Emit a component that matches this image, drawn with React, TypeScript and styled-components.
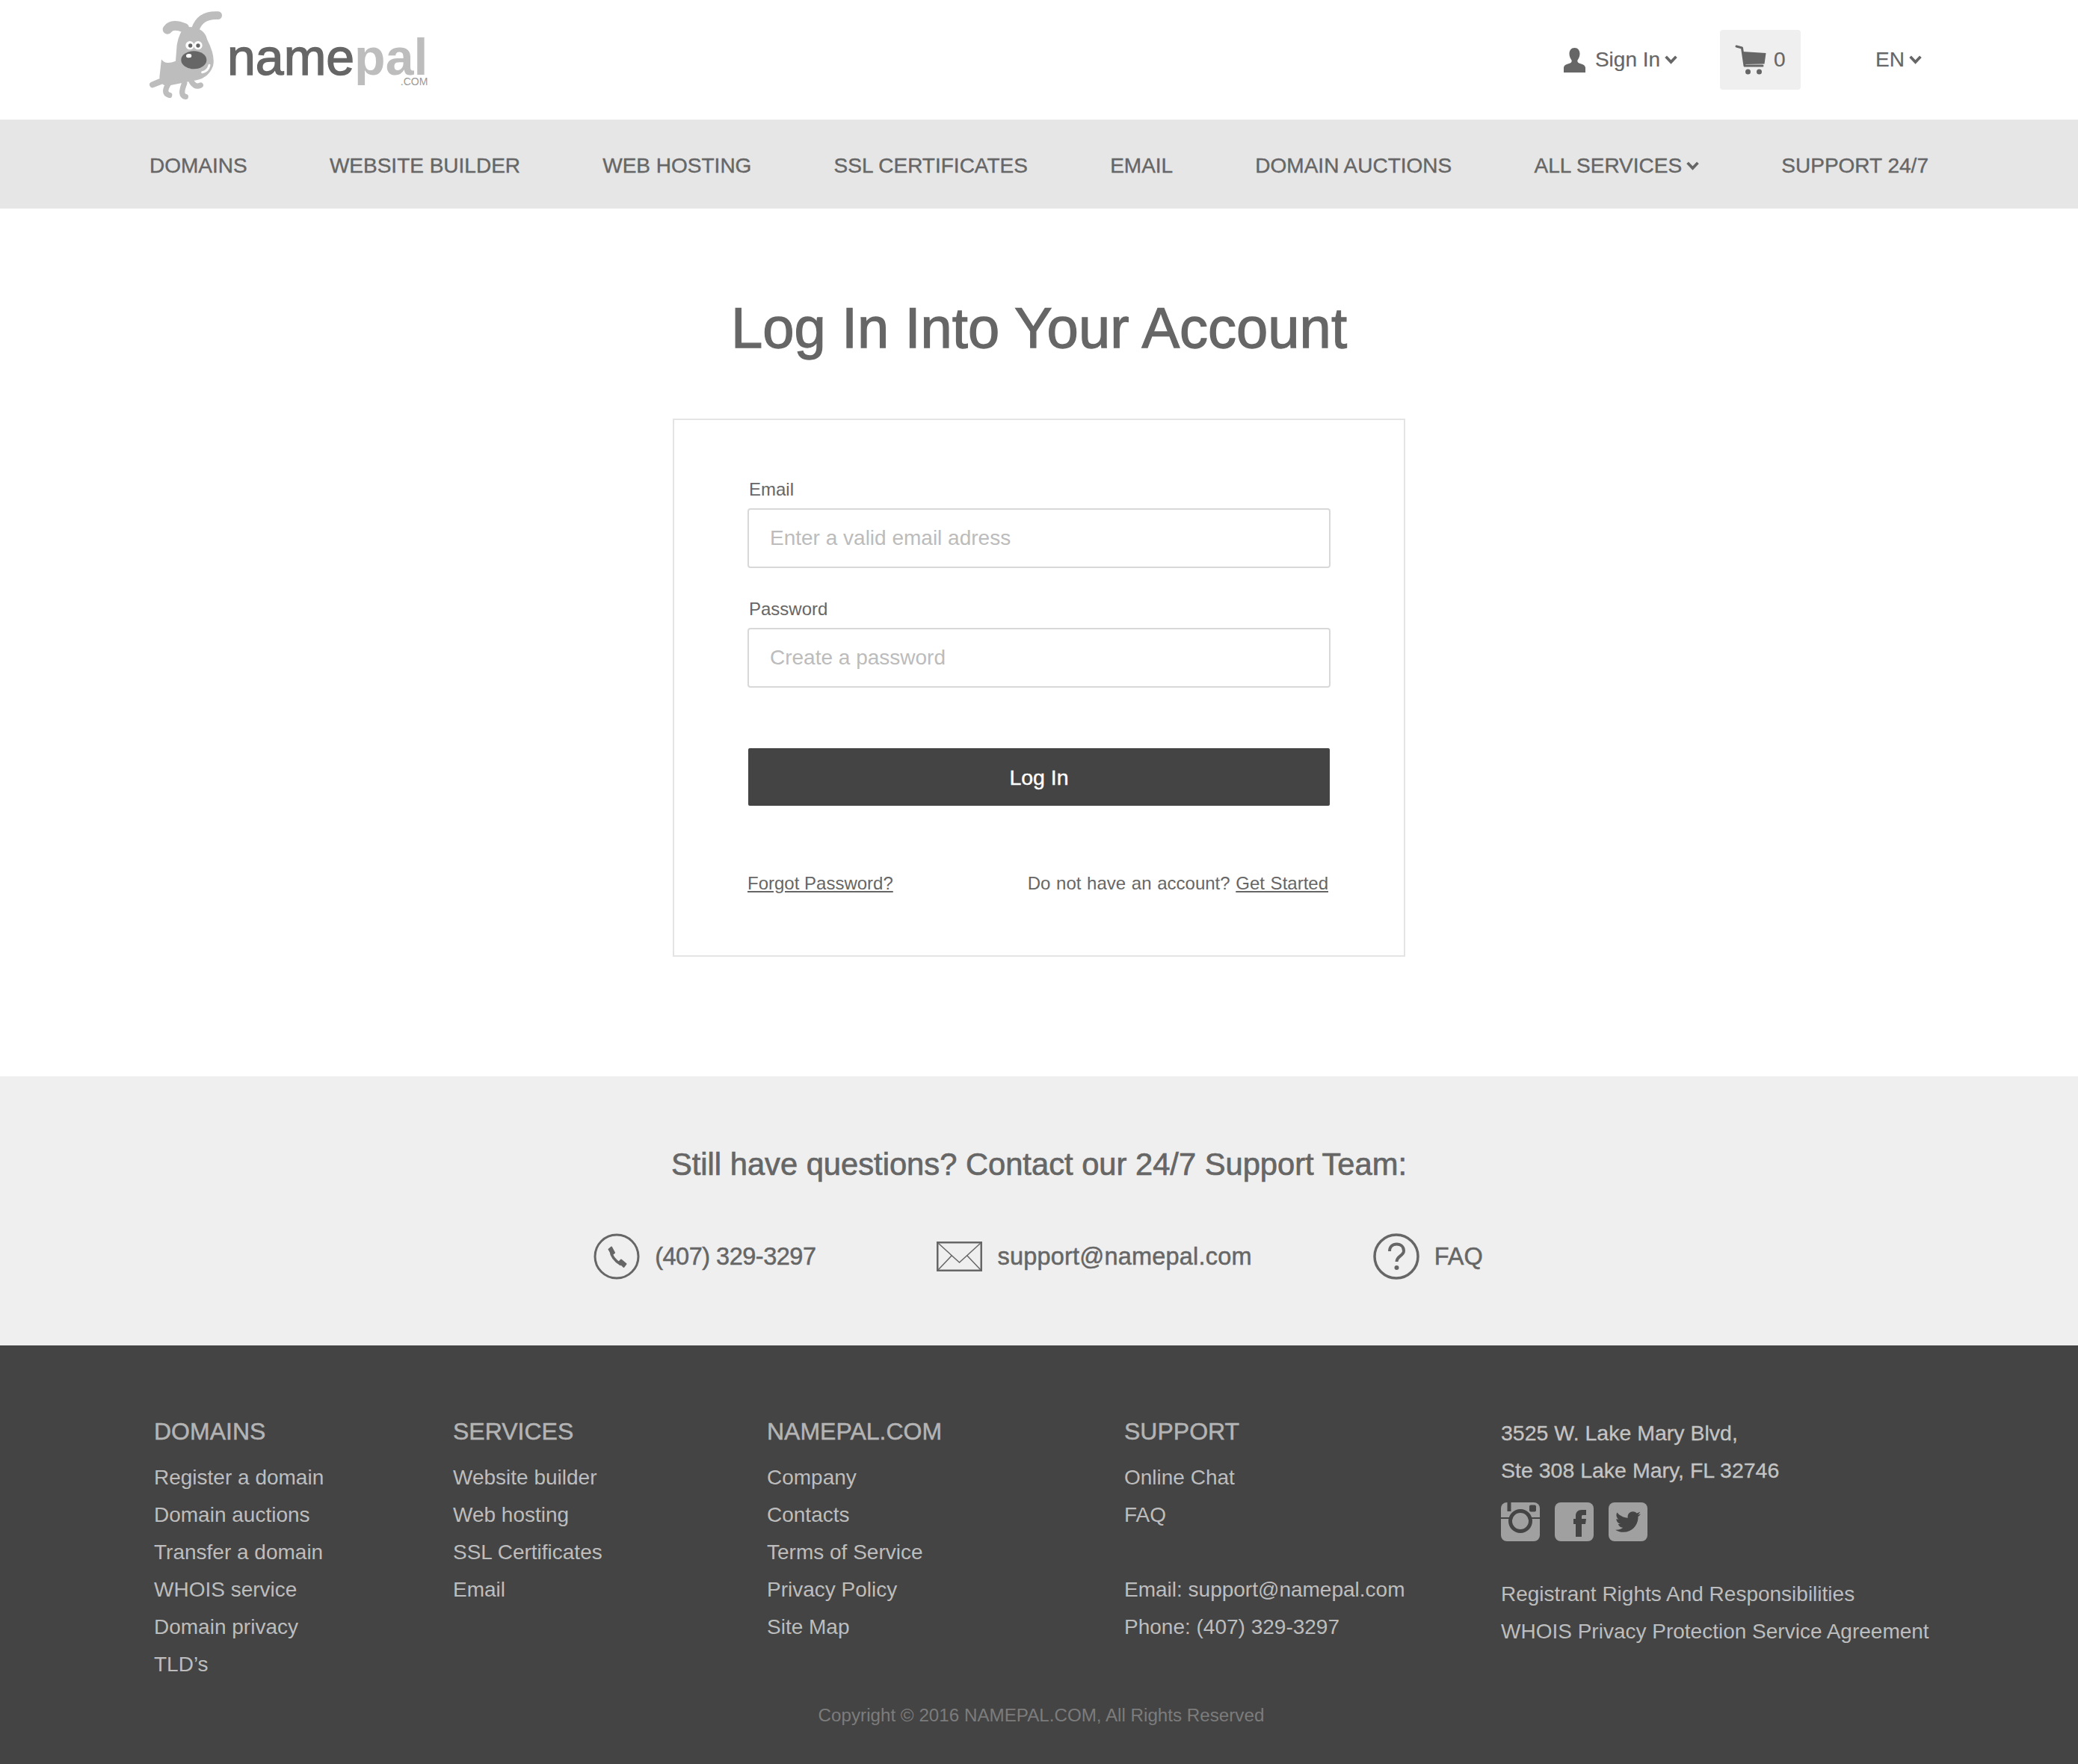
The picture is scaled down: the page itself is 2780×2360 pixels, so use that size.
import React from 'react'
import styled, { createGlobalStyle } from 'styled-components'
import { FaTwitter } from 'react-icons/fa'

const GlobalStyle = createGlobalStyle`
  html, body {
    margin: 0;
    padding: 0;
    background: #fff;
    font-family: "Liberation Sans", Arial, sans-serif;
    color: #666;
  }
  * { box-sizing: border-box; }
`

const Page = styled.div`
  width: 2780px;
  height: 2360px;
  display: flex;
  flex-direction: column;
  overflow: hidden;
`

const Header = styled.header`
  height: 160px;
  display: flex;
  align-items: center;
  justify-content: space-between;
  padding: 0 209px 0 200px;
`

const Logo = styled.a`
  position: relative;
  display: flex;
  align-items: flex-start;
  height: 160px;
  padding-top: 10px;
`

const LogoName = styled.div`
  margin: 35px 0 0 4px;
  font-size: 68px;
  line-height: 62px;
  color: #666;
  -webkit-text-stroke: 1.4px #666;
`

const LogoPal = styled.span`
  color: #bdbdbd;
  font-weight: 700;
  -webkit-text-stroke: 0;
`

const LogoCom = styled.span`
  position: absolute;
  right: 0;
  top: 104px;
  font-size: 14px;
  line-height: 10px;
  color: #999;
  -webkit-text-stroke: 0;
`

const UserMenu = styled.div`
  display: flex;
  align-items: center;
`

const MenuText = styled.span`
  font-size: 28px;
  line-height: 34px;
  color: #666;
  -webkit-text-stroke: 0.2px #666;
`

const SignIn = styled.a`
  display: flex;
  align-items: center;
  gap: 13px;
`

const MenuLabel = styled.span`
  display: flex;
  align-items: center;
  gap: 6px;
`

const CartBox = styled.a`
  width: 108px;
  height: 80px;
  margin-left: 57px;
  padding-left: 20px;
  display: flex;
  align-items: center;
  gap: 9px;
  background: #efefef;
  border-radius: 4px;
`

const Language = styled(MenuLabel)`
  margin-left: 100px;
`

const Nav = styled.nav`
  height: 119px;
  padding: 5px 200px 0;
  display: flex;
  align-items: center;
  justify-content: space-between;
  background: #e6e6e6;
`

const NavItem = styled.a`
  display: flex;
  align-items: center;
  gap: 6px;
  font-size: 28px;
  color: #666;
  -webkit-text-stroke: 0.4px #666;
  white-space: nowrap;
`

const Main = styled.main`
  height: 1161px;
  display: flex;
  flex-direction: column;
  align-items: center;
  padding-top: 115px;
`

const Title = styled.h1`
  margin: 0;
  font-size: 76px;
  line-height: 90px;
  font-weight: 400;
  color: #666;
  -webkit-text-stroke: 1.3px #666;
`

const Card = styled.form`
  width: 980px;
  height: 720px;
  margin-top: 76px;
  padding: 78px 98px 0;
  border: 2px solid #e4e4e4;
`

const FieldLabel = styled.label`
  display: block;
  margin: 0 0 10px 2px;
  font-size: 24px;
  line-height: 30px;
  color: #666;
`

const Field = styled.div`
  margin-bottom: 40px;
`

const TextInput = styled.input`
  display: block;
  width: 780px;
  height: 80px;
  padding: 0 28px;
  border: 2px solid #d8d8d8;
  border-radius: 4px;
  background: #fff;
  font-family: inherit;
  font-size: 28px;
  color: #666;
  &::placeholder {
    color: #bcbcbc;
    opacity: 1;
  }
`

const SubmitButton = styled.button`
  display: block;
  width: 778px;
  height: 77px;
  margin: 81px 0 0 1px;
  padding: 2px 0 0;
  border: 0;
  border-radius: 2px;
  background: #444;
  color: #fff;
  font-family: inherit;
  font-size: 28.500px;
  -webkit-text-stroke: 0.4px #fff;
`

const CardLinks = styled.div`
  display: flex;
  justify-content: space-between;
  margin: 89px 3px 0 0;
  font-size: 24px;
  line-height: 30px;
  color: #666;
`

const SignUpPrompt = styled.span`
  word-spacing: 1px;
`

const Link = styled.a`
  color: #666;
  text-decoration: underline;
`

const Contact = styled.section`
  height: 360px;
  background: #efefef;
  display: flex;
  flex-direction: column;
  align-items: center;
  padding-top: 91px;
`

const ContactTitle = styled.h2`
  margin: 0;
  font-size: 41.700px;
  line-height: 54px;
  font-weight: 400;
  color: #666;
  -webkit-text-stroke: 0.7px #666;
`

const ContactRow = styled.div`
  display: flex;
  align-items: center;
  gap: 162px;
  margin: 65px 0 0 -2px;
`

const ContactItem = styled.a<{ $tracking?: number }>`
  display: flex;
  align-items: center;
  gap: 20px;
  font-size: 32.500px;
  line-height: 62px;
  letter-spacing: ${p => p.$tracking ?? 0}px;
  color: #666;
  -webkit-text-stroke: 0.5px #666;
`

const Footer = styled.footer`
  height: 560px;
  background: #444;
  color: #bdbdbd;
  display: flex;
  flex-direction: column;
`

const FooterColumns = styled.div`
  display: flex;
  align-items: flex-start;
  padding: 90px 0 0 206px;
  height: 480px;
`

const Column = styled.div<{ $width: number; $top?: number }>`
  width: ${p => p.$width}px;
  padding-top: ${p => p.$top ?? 0}px;
  flex: none;
`

const ColumnTitle = styled.h3`
  margin: 0 0 12px;
  font-size: 32px;
  line-height: 50px;
  font-weight: 400;
  color: #b4b4b4;
  -webkit-text-stroke: 0.5px #b4b4b4;
`

const FooterLine = styled.a<{ $gap?: boolean }>`
  display: block;
  font-size: 28px;
  line-height: 50px;
  color: #bdbdbd;
  white-space: nowrap;
  margin-top: ${p => (p.$gap ? 50 : 0)}px;
`

const Address = styled.div`
  font-size: 28.500px;
  line-height: 50px;
  color: #c4c4c4;
  -webkit-text-stroke: 0.3px #c4c4c4;
  white-space: nowrap;
`

const Socials = styled.div`
  display: flex;
  gap: 20px;
  margin: 18px 0 46px;
`

const SocialTile = styled.a`
  width: 52px;
  height: 52px;
  border-radius: 8px;
  background: #a0a0a0;
  color: #444;
  display: flex;
  align-items: center;
  justify-content: center;
  overflow: hidden;
`

const Copyright = styled.div`
  text-align: center;
  margin-left: 6px;
  font-size: 24.200px;
  line-height: 30px;
  color: #7c7c7c;
`

const Chevron = ({ size = 17 }: { size?: number }) => (
  <svg width={size} height={size * 0.7} viewBox="0 0 16 11" fill="none" stroke="#666" strokeWidth="3.500">
    <path d="M1.500 1.500 8 8.500l6.500-7" />
  </svg>
)

const DogLogo = () => (
  <svg width="100" height="125" viewBox="60 30 300 375">
    <g fill="none" stroke="#bdbdbd" strokeLinecap="round" strokeLinejoin="round">
      <path d="M132 118 Q150 92 200 112" strokeWidth="38" />
      <path d="M245 115 Q265 58 335 62" strokeWidth="32" />
      <path d="M72 340 Q120 320 150 310" strokeWidth="24" />
      <path d="M140 330 Q110 375 140 382" strokeWidth="22" />
      <path d="M200 335 Q180 385 205 388" strokeWidth="22" />
      <path d="M225 320 Q240 355 265 342" strokeWidth="22" />
    </g>
    <path
      fill="#bdbdbd"
      d="M205 108 Q280 105 292 160 Q325 225 315 265 Q295 320 230 325 L130 345 Q100 340 100 310 L108 238 Q122 262 165 245 L170 180 Q180 125 205 108Z"
    />
    <circle cx="222" cy="182" r="17" fill="#fff" />
    <circle cx="255" cy="182" r="17" fill="#fff" />
    <circle cx="224" cy="183" r="8" fill="#666" />
    <circle cx="255" cy="183" r="8" fill="#666" />
    <ellipse cx="238" cy="241" rx="51" ry="36" fill="#666" />
    <ellipse cx="218" cy="224" rx="11" ry="8" fill="#fff" />
    <path d="M300 262 Q295 285 272 290" fill="none" stroke="#fff" strokeWidth="9" strokeLinecap="round" />
  </svg>
)

const UserIcon = () => (
  <svg width="29" height="33" viewBox="0 0 29 33" fill="#666">
    <path d="M14.500 0C19 0 21.500 3.400 21.500 8c0 3.500-1.500 6.500-3 8.500-.5 1.500 0 3 2 4 4 1.500 8 2 8.500 6V33H0v-6.500c.5-4 4.500-4.500 8.500-6 2-1 2.500-2.500 2-4-1.500-2-3-5-3-8.500 0-4.600 2.500-8 7-8Z" />
  </svg>
)

const CartIcon = () => (
  <svg width="43" height="40" viewBox="0 0 42 40">
    <path d="M1.500 2 9 4l3.500 24h24" fill="none" stroke="#666" strokeWidth="3" strokeLinecap="round" strokeLinejoin="round" />
    <path d="M9.500 9 41 11l-2 14.500-25.500 .5Z" fill="#666" />
    <circle cx="17" cy="36" r="3.500" fill="#666" />
    <circle cx="32" cy="36" r="3.500" fill="#666" />
  </svg>
)

const PhoneIcon = () => (
  <svg width="62" height="62" viewBox="0 0 62 62" fill="none">
    <circle cx="31" cy="31" r="29" stroke="#666" strokeWidth="3" />
    <path d="M23 23 Q24 34 37 42" stroke="#666" strokeWidth="3.500" />
    <path d="M20.500 21.500 24 18.500 28 26 25 28.500Z M34 38.500 37 35.500 43.500 41 40.500 45Z" fill="#666" stroke="#666" strokeLinejoin="round" strokeWidth="2" />
  </svg>
)

const MailIcon = () => (
  <svg width="61" height="40" viewBox="0 0 61 40" fill="none" stroke="#666">
    <rect x="1.250" y="1.250" width="58.500" height="37.500" strokeWidth="2.500" />
    <path d="M2 2 30.500 28 59 2M2 38 20 19M59 38 41 19" strokeWidth="1.500" />
  </svg>
)

const HelpIcon = () => (
  <svg width="62" height="62" viewBox="0 0 62 62" fill="none">
    <circle cx="31" cy="31" r="29" stroke="#666" strokeWidth="3.500" />
    <path d="M22 24c0-6 4-9.500 9.500-9.500S41 18 41 23.500c0 6.500-9.500 7-9.500 14.500" stroke="#666" strokeWidth="4" />
    <circle cx="31.500" cy="46" r="3" fill="#666" />
  </svg>
)

const InstagramIcon = () => (
  <svg width="52" height="52" viewBox="0 0 52 52" fill="none">
    <path d="M0 21H14M38 21H52" stroke="#444" strokeWidth="2" />
    <circle cx="26" cy="25" r="13.500" stroke="#444" strokeWidth="5" />
    <rect x="38" y="3.500" width="9" height="9" rx="2" fill="#444" />
    <path d="M11 0V12" stroke="#444" strokeWidth="5" />
  </svg>
)

const FacebookIcon = () => (
  <svg width="52" height="52" viewBox="0 0 52 52" fill="#444">
    <path d="M28 46V29h-3v-7h3v-4c0-5 3-8 8-8h6v7h-4c-1.500 0-2 .5-2 2v3h6l-1 7h-5v17Z" />
  </svg>
)

const navItems = ['DOMAINS', 'WEBSITE BUILDER', 'WEB HOSTING', 'SSL CERTIFICATES', 'EMAIL', 'DOMAIN AUCTIONS']

const columns = [
  { title: 'DOMAINS', width: 400, links: ['Register a domain', 'Domain auctions', 'Transfer a domain', 'WHOIS service', 'Domain privacy', 'TLD’s'] },
  { title: 'SERVICES', width: 420, links: ['Website builder', 'Web hosting', 'SSL Certificates', 'Email'] },
  { title: 'NAMEPAL.COM', width: 478, links: ['Company', 'Contacts', 'Terms of Service', 'Privacy Policy', 'Site Map'] },
]

const App = () => (
  <Page>
    <GlobalStyle />
    <Header>
      <Logo>
        <DogLogo />
        <LogoName>
          name<LogoPal>pal</LogoPal>
        </LogoName>
        <LogoCom>.COM</LogoCom>
      </Logo>
      <UserMenu>
        <SignIn>
          <UserIcon />
          <MenuLabel>
            <MenuText>Sign In</MenuText>
            <Chevron />
          </MenuLabel>
        </SignIn>
        <CartBox>
          <CartIcon />
          <MenuText>0</MenuText>
        </CartBox>
        <Language>
          <MenuText>EN</MenuText>
          <Chevron />
        </Language>
      </UserMenu>
    </Header>
    <Nav>
      {navItems.map(item => (
        <NavItem key={item}>{item}</NavItem>
      ))}
      <NavItem>
        ALL SERVICES
        <Chevron />
      </NavItem>
      <NavItem>SUPPORT 24/7</NavItem>
    </Nav>
    <Main>
      <Title>Log In Into Your Account</Title>
      <Card>
        <Field>
          <FieldLabel>Email</FieldLabel>
          <TextInput placeholder="Enter a valid email adress" />
        </Field>
        <Field>
          <FieldLabel>Password</FieldLabel>
          <TextInput placeholder="Create a password" />
        </Field>
        <SubmitButton type="button">Log In</SubmitButton>
        <CardLinks>
          <Link>Forgot Password?</Link>
          <SignUpPrompt>
            Do not have an account? <Link>Get Started</Link>
          </SignUpPrompt>
        </CardLinks>
      </Card>
    </Main>
    <Contact>
      <ContactTitle>Still have questions? Contact our 24/7 Support Team:</ContactTitle>
      <ContactRow>
        <ContactItem $tracking={-0.5}>
          <PhoneIcon />
          (407) 329-3297
        </ContactItem>
        <ContactItem $tracking={0.2}>
          <MailIcon />
          support@namepal.com
        </ContactItem>
        <ContactItem>
          <HelpIcon />
          FAQ
        </ContactItem>
      </ContactRow>
    </Contact>
    <Footer>
      <FooterColumns>
        {columns.map(col => (
          <Column key={col.title} $width={col.width}>
            <ColumnTitle>{col.title}</ColumnTitle>
            {col.links.map(link => (
              <FooterLine key={link}>{link}</FooterLine>
            ))}
          </Column>
        ))}
        <Column $width={504}>
          <ColumnTitle>SUPPORT</ColumnTitle>
          <FooterLine>Online Chat</FooterLine>
          <FooterLine>FAQ</FooterLine>
          <FooterLine $gap>Email: support@namepal.com</FooterLine>
          <FooterLine>Phone: (407) 329-3297</FooterLine>
        </Column>
        <Column $width={580} $top={2}>
          <Address>3525 W. Lake Mary Blvd,</Address>
          <Address>Ste 308 Lake Mary, FL 32746</Address>
          <Socials>
            <SocialTile>
              <InstagramIcon />
            </SocialTile>
            <SocialTile>
              <FacebookIcon />
            </SocialTile>
            <SocialTile>
              <FaTwitter size={34} />
            </SocialTile>
          </Socials>
          <FooterLine>Registrant Rights And Responsibilities</FooterLine>
          <FooterLine>WHOIS Privacy Protection Service Agreement</FooterLine>
        </Column>
      </FooterColumns>
      <Copyright>Copyright © 2016 NAMEPAL.COM, All Rights Reserved</Copyright>
    </Footer>
  </Page>
)

export default App
